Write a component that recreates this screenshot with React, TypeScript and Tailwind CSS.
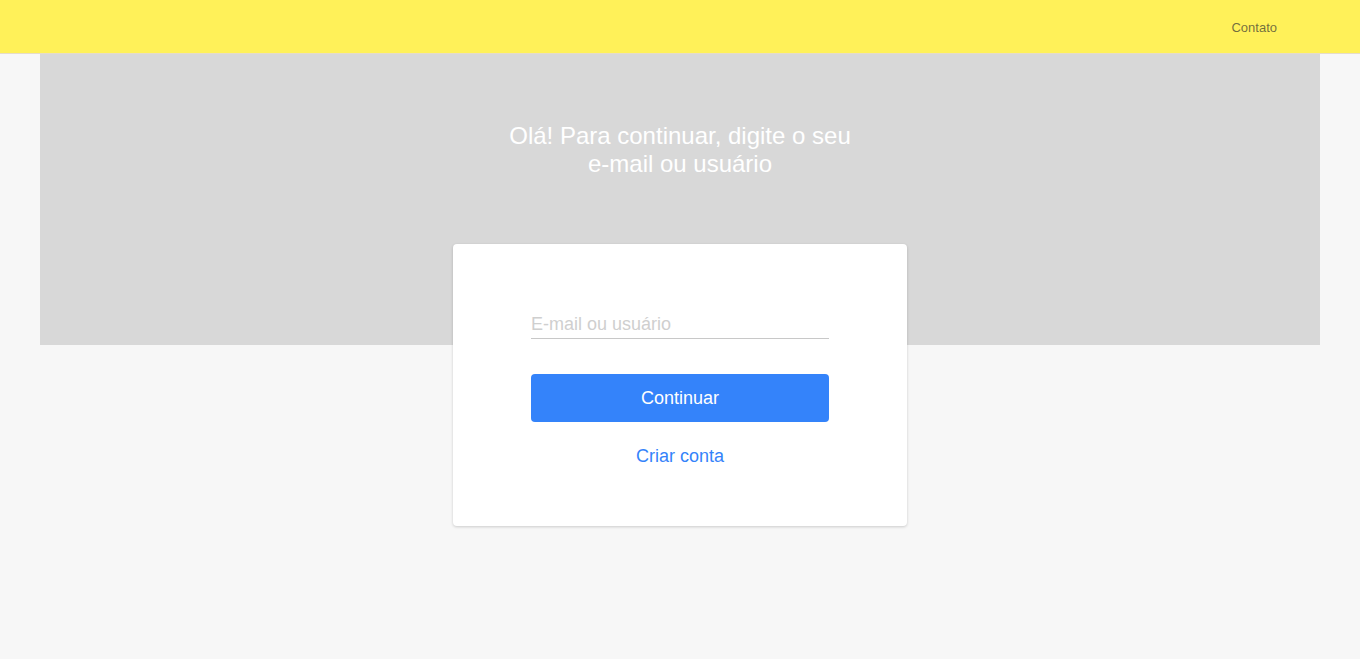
import React from 'react';

export default function App() {
  return (
    <div className="min-h-[659px] bg-[#f7f7f7] font-['Liberation_Sans',Arial,sans-serif]">
      <header className="h-[54px] bg-[#fff159] border-b border-[#e6dcc8] flex items-center justify-end pr-[83px]">
        <a className="text-[13px] text-[#333333]/70 pt-[2px]">Contato</a>
      </header>

      <main className="px-[40px]">
        <div className="h-[291px] bg-[#d8d8d8] flex justify-center pt-[68px]">
          <h1 className="w-[360px] text-center text-[24px] leading-[28px] text-white">
            Olá! Para continuar, digite o seu <span className="whitespace-nowrap">e-mail</span> ou usuário
          </h1>
        </div>

        <div className="flex justify-center -mt-[101px]">
          <div className="w-[454px] h-[282px] bg-white rounded-[4px] shadow-[0_1px_3px_rgba(0,0,0,0.18)] px-[78px] pt-[56px] flex flex-col">
            <input
              placeholder="E-mail ou usuário"
              className="h-[39px] w-full border-b border-[#c8c8c8] pt-[10px] text-[18px] text-[#333] placeholder:text-[#cfcfcf] outline-none bg-transparent"
            />
            <button className="mt-[35px] h-[48px] w-full rounded-[4px] bg-[#3483fa] text-white text-[18px]">
              Continuar
            </button>
            <a className="mt-[21px] text-center text-[18px] text-[#3483fa]">Criar conta</a>
          </div>
        </div>
      </main>
    </div>
  );
}
